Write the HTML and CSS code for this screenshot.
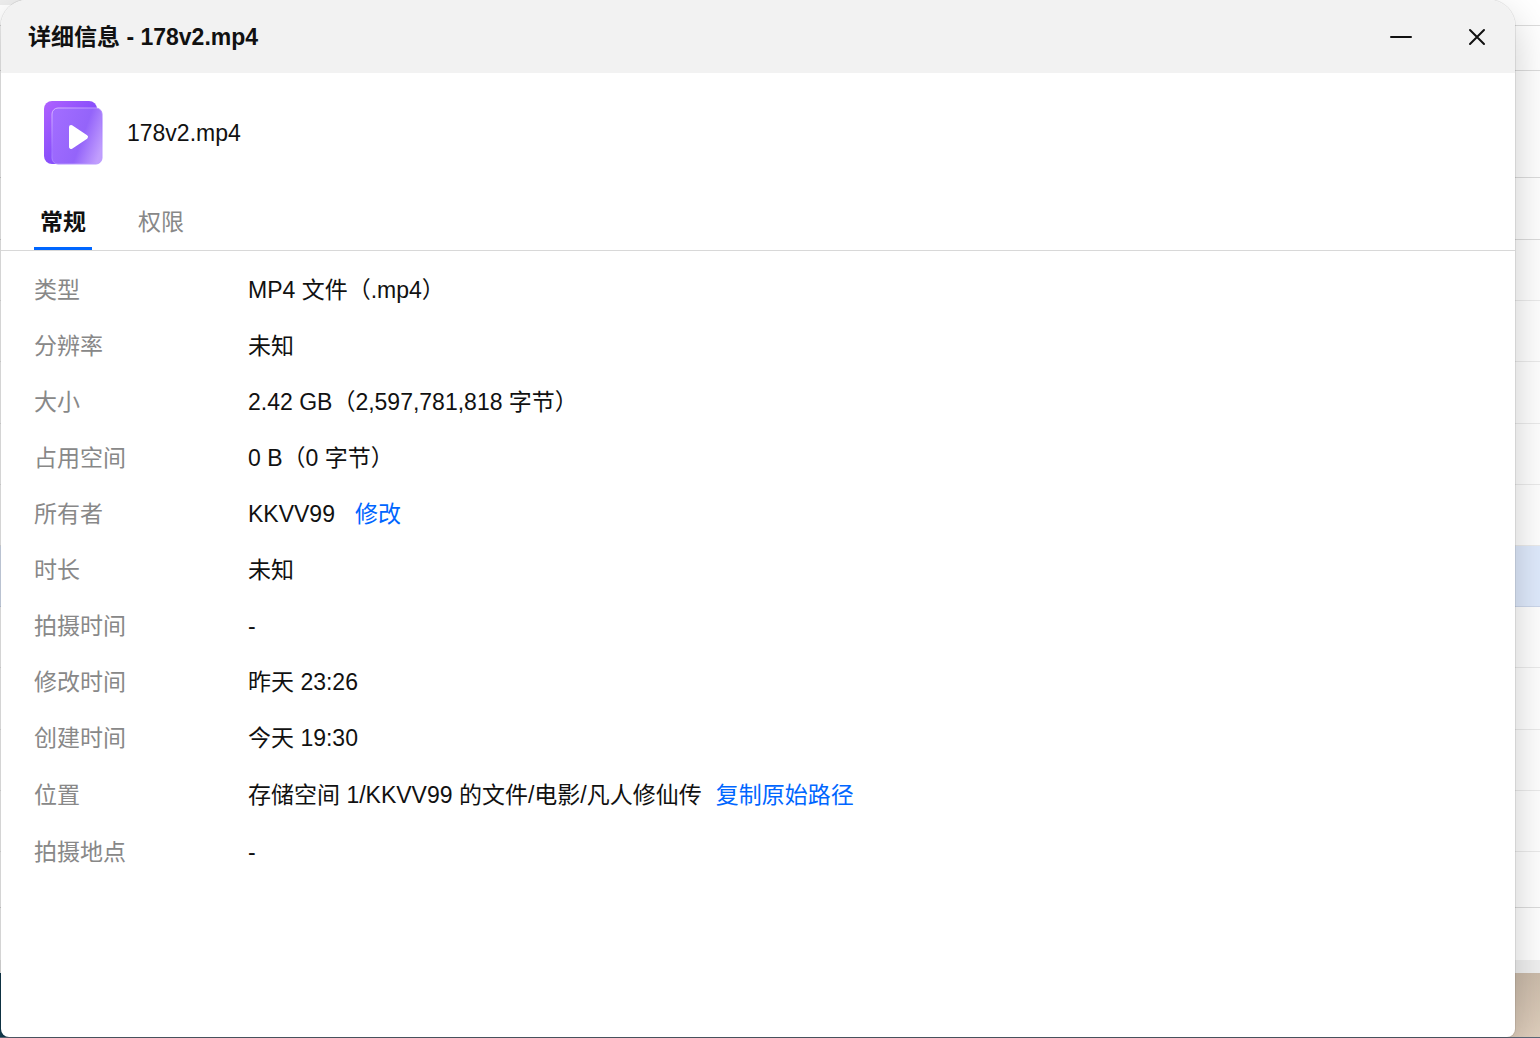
FILE: index.html
```html
<!DOCTYPE html>
<html lang="zh-CN">
<head>
    <meta charset="UTF-8">
    <meta name="viewport" content="width=device-width, initial-scale=1.0">
    <title>详细信息 - 178v2.mp4</title>
    <link rel="stylesheet" href="styles.css">
</head>
<body>

    <!-- File manager window behind the dialog -->
    <div class="manager" aria-hidden="true">
        <div class="bar bar-top"></div>
        <div class="bar bar-tools"></div>
        <div class="bar bar-path"></div>
        <div class="bar bar-columns"></div>
        <div class="file-list">
            <div class="file-row"></div>
            <div class="file-row"></div>
            <div class="file-row"></div>
            <div class="file-row"></div>
            <div class="file-row"></div>
            <div class="file-row selected"></div>
            <div class="file-row"></div>
            <div class="file-row"></div>
            <div class="file-row"></div>
            <div class="file-row"></div>
        </div>
        <div class="bar bar-bottom"></div>
        <div class="status"></div>
        <div class="scroll-track"></div>
        <div class="wallpaper"></div>
    </div>

    <!-- Details dialog -->
    <div class="dialog" role="dialog" aria-labelledby="dialog-title">
        <div class="dialog-header">
            <h1 id="dialog-title">详细信息 - 178v2.mp4</h1>
            <div class="window-buttons">
                <button type="button" aria-label="最小化">
                    <svg width="24" height="24" viewBox="0 0 24 24"><path d="M2 12H22" /></svg>
                </button>
                <button type="button" aria-label="关闭">
                    <svg width="24" height="24" viewBox="0 0 24 24"><path d="M5 5L19 19M19 5L5 19" /></svg>
                </button>
            </div>
        </div>

        <div class="file">
            <svg class="file-icon" width="60" height="66" viewBox="0 0 60 66" aria-hidden="true">
                <defs>
                    <linearGradient id="back" x1="0" y1="0" x2="1" y2="1">
                        <stop offset="0" stop-color="#b061ff" />
                        <stop offset="0.5" stop-color="#8a50fb" />
                        <stop offset="1" stop-color="#8050ff" />
                    </linearGradient>
                    <linearGradient id="front" x1="0" y1="0.3" x2="1" y2="0.7">
                        <stop offset="0" stop-color="#a16cff" />
                        <stop offset="0.6" stop-color="#9464fa" />
                        <stop offset="1" stop-color="#c19efd" />
                    </linearGradient>
                    <linearGradient id="edge" x1="0" y1="0" x2="0.5" y2="1">
                        <stop offset="0" stop-color="#d9b8ff" />
                        <stop offset="0.6" stop-color="#a278ff" />
                        <stop offset="1" stop-color="#b99aff" />
                    </linearGradient>
                </defs>
                <rect x="0" y="1" width="53" height="63" rx="8" fill="url(#back)" />
                <rect x="8" y="8" width="50" height="56" rx="6" fill="url(#front)" stroke="url(#edge)" />
                <path d="M27 27L42 37L27 47Z" fill="#fff" stroke="#fff" stroke-width="4" stroke-linejoin="round" />
            </svg>
            <span>178v2.mp4</span>
        </div>

        <div class="tabs" role="tablist">
            <button type="button" class="tab active" role="tab" aria-selected="true">常规</button>
            <button type="button" class="tab" role="tab" aria-selected="false">权限</button>
        </div>

        <dl class="details">
            <div class="detail"><dt>类型</dt><dd>MP4 文件（.mp4）</dd></div>
            <div class="detail"><dt>分辨率</dt><dd>未知</dd></div>
            <div class="detail"><dt>大小</dt><dd>2.42 GB（2,597,781,818 字节）</dd></div>
            <div class="detail"><dt>占用空间</dt><dd>0 B（0 字节）</dd></div>
            <div class="detail"><dt>所有者</dt><dd>KKVV99<a class="owner-link" href="#">修改</a></dd></div>
            <div class="detail"><dt>时长</dt><dd>未知</dd></div>
            <div class="detail"><dt>拍摄时间</dt><dd>-</dd></div>
            <div class="detail"><dt>修改时间</dt><dd>昨天 23:26</dd></div>
            <div class="detail"><dt>创建时间</dt><dd>今天 19:30</dd></div>
            <div class="detail location"><dt>位置</dt><dd>存储空间 1/KKVV99 的文件/电影/凡人修仙传<a class="path-link" href="#">复制原始路径</a></dd></div>
            <div class="detail"><dt>拍摄地点</dt><dd>-</dd></div>
        </dl>
    </div>

</body>
</html>
```
FILE: styles.css
```css
* {
    margin: 0;
    padding: 0;
    box-sizing: border-box;
}

body {
    position: relative;
    height: 100vh;
    overflow: hidden;
    background: #fff;
    color: #111;
    font-family: "Liberation Sans", "Noto Sans CJK SC", sans-serif;
    font-size: 23px;
    line-height: 32px;
}

button {
    border: none;
    background: none;
    color: inherit;
    font: inherit;
    cursor: pointer;
}

a {
    color: #0066ff;
    text-decoration: none;
}

/* Window behind */
.manager {
    display: flex;
    flex-direction: column;
    height: 100vh;
}

.bar {
    border-bottom: 1px solid #dcdcdc;
}

.bar-top {
    height: 26px;
    background: linear-gradient(90deg, #eee 50%, #fff 50%) no-repeat 0 0 / 100% 5px;
}

.bar-tools {
    height: 45px;
}

.bar-path {
    height: 107px;
}

.bar-columns {
    height: 62px;
}

.file-list {
    display: flex;
    flex: 1;
    flex-direction: column;
}

.file-row {
    flex: 1;
    border-bottom: 1px solid #ebebeb;
}

.file-row.selected {
    background: #dfeafc;
    border-bottom-color: #ccd7eb;
}

.bar-bottom {
    height: 56px;
}

.status {
    height: 52px;
}

.scroll-track {
    height: 13px;
    background: #f0f0f0;
}

.wallpaper {
    height: 65px;
    background: linear-gradient(90deg, #123c50 50%, transparent 50%), linear-gradient(#cbbbaa, #e0cfbd);
    border-bottom: 1px solid #5e6978;
}

/* Dialog */
.dialog {
    position: absolute;
    top: 0;
    right: 25px;
    bottom: 1px;
    left: 1px;
    overflow: hidden;
    background: #fff;
    border-radius: 26px 26px 8px 8px;
    box-shadow: 0 0 0 1px rgba(0, 0, 0, 0.08), 0 16px 40px rgba(0, 0, 0, 0.2);
}

.dialog-header {
    display: flex;
    align-items: center;
    justify-content: space-between;
    height: 73px;
    padding: 0 26px 0 27px;
    background: #f2f2f2;
}

.dialog-header h1 {
    font-size: 23px;
    font-weight: bold;
}

.window-buttons {
    display: flex;
    gap: 52px;
}

.window-buttons button {
    width: 24px;
    height: 24px;
}

.window-buttons svg {
    display: block;
    fill: none;
    stroke: #111;
    stroke-width: 2;
    stroke-linecap: round;
}

.file {
    display: flex;
    align-items: center;
    gap: 23px;
    height: 120px;
    padding: 0 43px;
}

.tabs {
    display: flex;
    gap: 40px;
    height: 58px;
    padding: 0 33px;
    border-bottom: 1px solid #d8d8d8;
}

.tab {
    height: 57px;
    padding: 0 6px;
    border-top: 3px solid transparent;
    border-bottom: 3px solid transparent;
    color: #888;
}

.tab.active {
    border-bottom-color: #0066ff;
    color: #111;
    font-weight: bold;
}

.details {
    padding: 11px 33px;
}

.detail {
    display: flex;
    align-items: center;
    height: 56px;
}

.detail.location {
    height: 58px;
}

.detail dt {
    width: 214px;
    color: #888;
}

.owner-link {
    margin-left: 20px;
}

.path-link {
    margin-left: 14px;
}
```
